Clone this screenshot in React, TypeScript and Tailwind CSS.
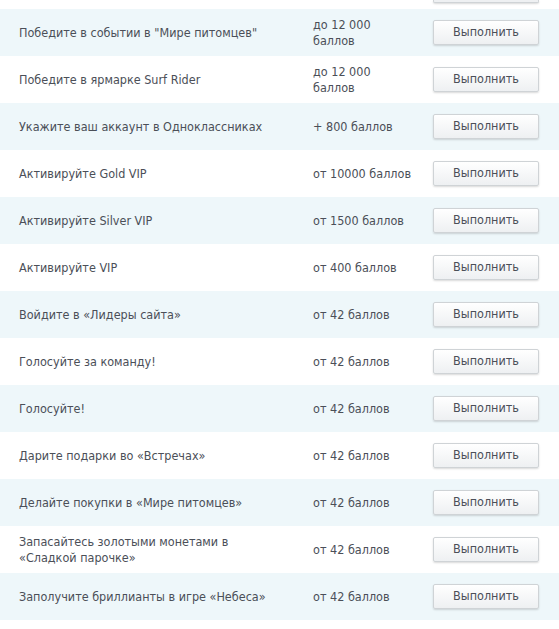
import React from 'react';

type Task = { title: string; reward: string };

const tasks: Task[] = [
  { title: 'Победите в событии в "Мире питомцев"', reward: 'до 12 000 баллов' },
  { title: 'Победите в ярмарке Surf Rider', reward: 'до 12 000 баллов' },
  { title: 'Укажите ваш аккаунт в Одноклассниках', reward: '+ 800 баллов' },
  { title: 'Активируйте Gold VIP', reward: 'от 10000 баллов' },
  { title: 'Активируйте Silver VIP', reward: 'от 1500 баллов' },
  { title: 'Активируйте VIP', reward: 'от 400 баллов' },
  { title: 'Войдите в «Лидеры сайта»', reward: 'от 42 баллов' },
  { title: 'Голосуйте за команду!', reward: 'от 42 баллов' },
  { title: 'Голосуйте!', reward: 'от 42 баллов' },
  { title: 'Дарите подарки во «Встречах»', reward: 'от 42 баллов' },
  { title: 'Делайте покупки в «Мире питомцев»', reward: 'от 42 баллов' },
  { title: 'Запасайтесь золотыми монетами в «Сладкой парочке»', reward: 'от 42 баллов' },
  { title: 'Заполучите бриллианты в игре «Небеса»', reward: 'от 42 баллов' },
];

function DoButton() {
  return (
    <button className="w-[106px] h-[25px] shrink-0 rounded-[2px] border border-[#cfd3d6] bg-gradient-to-b from-white to-[#eef0f2] text-[12.5px] text-[#4b4f58] shadow-[0_1px_2px_rgba(0,0,0,0.15)]">
      Выполнить
    </button>
  );
}

function Row({ task, shaded }: { task: Task; shaded: boolean }) {
  // "до 12 000 баллов" wraps in the original
  const parts = task.reward.startsWith('до ') ? ['до 12 000', 'баллов'] : [task.reward];
  return (
    <div className={`flex h-[47px] items-center pl-[19px] pr-[20px] ${shaded ? 'bg-[#eef7fa]' : 'bg-white'}`}>
      <div className="w-[294px] pr-[36px] leading-[16px]">{task.title}</div>
      <div className="w-[120px] whitespace-nowrap leading-[16px]">
        {parts.map((p, i) => (
          <div key={i}>{p}</div>
        ))}
      </div>
      <DoButton />
    </div>
  );
}

export default function App() {
  return (
    <div
      className="w-[559px] h-[629px] overflow-hidden bg-white text-[12.5px] text-[#4b4f58]"
      style={{ fontFamily: 'Tahoma, "DejaVu Sans Condensed", "DejaVu Sans", sans-serif' }}
    >
      {/* tail of previous row */}
      <div className="flex h-[9px] items-end justify-end overflow-hidden pr-[20px]">
        <div className="h-[3px] w-[106px] rounded-b-[2px] border-x border-b border-[#cfd3d6] bg-[#eef0f2] shadow-[0_1px_2px_rgba(0,0,0,0.15)] -translate-y-[6px]" />
      </div>
      {tasks.map((t, i) => (
        <Row key={i} task={t} shaded={i % 2 === 0} />
      ))}
      <div className="h-[9px] bg-white" />
    </div>
  );
}
